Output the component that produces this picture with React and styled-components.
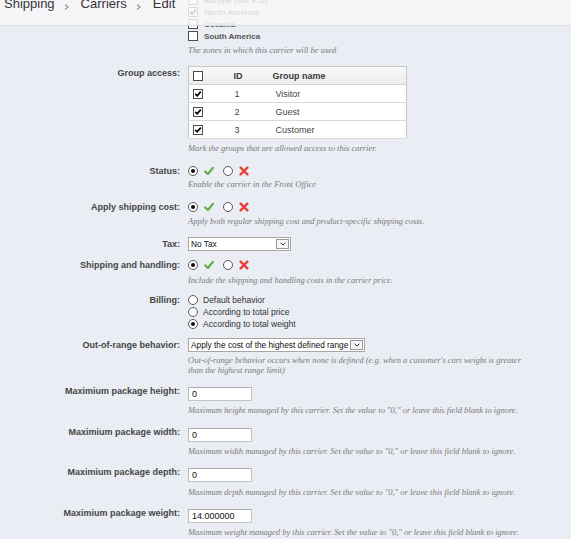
import React from 'react';
import styled, { createGlobalStyle } from 'styled-components';

const GlobalStyle = createGlobalStyle`
  html, body { margin: 0; padding: 0; }
  body {
    background: #eaedf4;
    font-family: "Liberation Sans", Arial, sans-serif;
    overflow: hidden;
  }
`;

const Page = styled.div`
  position: relative;
  width: 571px;
  height: 539px;
  overflow: hidden;
  background: #eaedf4;
`;

const TopBar = styled.header`
  position: absolute;
  top: 0;
  left: 0;
  right: 0;
  height: 25px;
  background: rgba(248, 248, 249, 0.84);
  border-bottom: 1px solid #dcdde1;
  z-index: 2;
`;

const Breadcrumb = styled.nav`
  display: flex;
  align-items: flex-start;
  margin-top: -3.5px;
  padding-left: 4px;
  font-size: 13px;
  line-height: 13px;
  color: #333;
`;

const Crumb = styled.span`
  white-space: nowrap;
`;

const Sep = styled.svg`
  width: 5px;
  height: 6px;
  margin: 7.5px 12px 0 9px;
  flex: none;
`;

const Content = styled.main`
  display: flex;
  flex-direction: column;
  margin-top: -6px;
`;

const FormRow = styled.div`
  display: grid;
  grid-template-columns: 180px 1fr;
  column-gap: 8px;
  margin-top: ${p => p.$gap || 0}px;
`;

const Label = styled.div`
  text-align: right;
  font-weight: bold;
  font-size: 9px;
  line-height: ${p => p.$lh || 12}px;
  color: #464646;
  margin-top: ${p => p.$shift || 0}px;
  white-space: nowrap;
`;

const Field = styled.div`
  display: flex;
  flex-direction: column;
  align-items: flex-start;
  min-width: 0;
`;

const Help = styled.p`
  margin: ${p => (p.$mt === undefined ? 3 : p.$mt)}px 0 0;
  font-family: "Liberation Serif", "Times New Roman", serif;
  font-style: italic;
  font-size: 8.5px;
  line-height: 10px;
  color: #7a7a7a;
  white-space: nowrap;
`;

const ZoneItem = styled.div`
  display: flex;
  align-items: center;
  height: 12px;
  gap: 6px;
`;

const ZoneName = styled.span`
  font-weight: bold;
  font-size: 8px;
  color: #555;
  white-space: nowrap;
`;

const Box = styled.span`
  width: 10px;
  height: 10px;
  box-sizing: border-box;
  border: 1px solid #4c4c4c;
  background: #fff;
  display: inline-flex;
  align-items: center;
  justify-content: center;
  flex: none;
`;

const Check = ({ checked }) => (
  <Box>
    {checked && (
      <svg width="8" height="8" viewBox="0 0 8 8">
        <path d="M1.3 3.8 L3.2 5.8 L6.8 1.6" fill="none" stroke="#000" strokeWidth="1.7" />
      </svg>
    )}
  </Box>
);

const GroupTable = styled.table`
  width: 219px;
  border-collapse: collapse;
  border: 1px solid #c6c6c6;
  background: #fff;
  font-size: 9px;
  color: #444;
  table-layout: fixed;
`;

const HeadRow = styled.tr`
  height: 18px;
  background: linear-gradient(#f9f9f9, #ececec);
`;

const BodyRow = styled.tr`
  height: 18px;
  background: #fff;
`;

const Th = styled.th`
  padding: 0 0 0 ${p => p.$pl || 0}px;
  text-align: left;
  font-weight: bold;
  color: #3a3a3a;
  border-bottom: 1px solid #d2d2d2;
  vertical-align: middle;
`;

const Td = styled.td`
  padding: 0 0 0 ${p => p.$pl || 0}px;
  border-bottom: 1px solid #d9d9d9;
  vertical-align: middle;
`;

const CellBox = styled.div`
  display: flex;
  align-items: center;
`;

const Choice = styled.div`
  display: flex;
  align-items: center;
  height: 12px;
  font-size: 8.5px;
  color: #333;
  white-space: nowrap;
`;

const Radio = styled.span`
  width: 10px;
  height: 10px;
  box-sizing: border-box;
  border-radius: 50%;
  border: 1px solid #5a5a5a;
  background: #fff;
  display: inline-flex;
  align-items: center;
  justify-content: center;
  flex: none;
  margin-right: ${p => p.$mr || 0}px;
  &::after {
    content: '';
    width: 4px;
    height: 4px;
    border-radius: 50%;
    background: #111;
    display: ${p => (p.$checked ? 'block' : 'none')};
  }
`;

const Icon = styled.svg`
  width: 10px;
  height: 10px;
  flex: none;
  margin-right: ${p => p.$mr || 0}px;
`;

const YesIcon = (props) => (
  <Icon viewBox="0 0 10 10" {...props}>
    <path d="M1.2 5.4 L3.9 8 L8.9 1.8" fill="none" stroke="#5fae3e" strokeWidth="2.1" strokeLinecap="round" strokeLinejoin="round" />
  </Icon>
);

const NoIcon = (props) => (
  <Icon viewBox="0 0 10 10" {...props}>
    <path d="M1.6 1.6 L8.4 8.4 M8.4 1.6 L1.6 8.4" fill="none" stroke="#e5443c" strokeWidth="2.4" strokeLinecap="round" />
  </Icon>
);

const Toggle = ({ on }) => (
  <Choice>
    <Radio $checked={on} $mr={6} />
    <YesIcon $mr={9} />
    <Radio $checked={!on} $mr={6} />
    <NoIcon />
  </Choice>
);

const Select = styled.div`
  display: flex;
  align-items: stretch;
  box-sizing: border-box;
  width: ${p => p.$w}px;
  height: 14px;
  border: 1px solid #a6a6a6;
  background: #fff;
  font-size: 8.3px;
  line-height: 12px;
  color: #111;
`;

const SelectValue = styled.span`
  flex: 1;
  padding-left: 2px;
  white-space: nowrap;
  overflow: hidden;
`;

const SelectArrow = styled.span`
  width: 13px;
  box-sizing: border-box;
  margin: 1px;
  border: 1px solid #979797;
  background: #f7f7f7;
  display: flex;
  align-items: center;
  justify-content: center;
  flex: none;
`;

const Caret = () => (
  <svg width="6" height="4" viewBox="0 0 6 4">
    <path d="M0.6 0.7 L3 3 L5.4 0.7" fill="none" stroke="#333" strokeWidth="1" />
  </svg>
);

const TextInput = styled.input`
  width: 64px;
  height: 14px;
  box-sizing: border-box;
  margin: 0;
  padding: 0 3px;
  border: 1px solid #c4c4c4;
  border-top-color: #ababab;
  border-left-color: #b5b5b5;
  background: #fff;
  font-family: "Liberation Sans", Arial, sans-serif;
  font-size: 9px;
  color: #111;
  outline: none;
`;

const zones = [
  { name: 'Europe (out E.U)', checked: false },
  { name: 'North America', checked: true },
  { name: 'Oceania', checked: false },
  { name: 'South America', checked: false },
];

const groups = [
  { id: 1, name: 'Visitor' },
  { id: 2, name: 'Guest' },
  { id: 3, name: 'Customer' },
];

const billing = [
  { text: 'Default behavior', checked: false },
  { text: 'According to total price', checked: false },
  { text: 'According to total weight', checked: true },
];

const limits = [
  { label: 'Maximium package height:', value: '0', help: 'Maximum height managed by this carrier. Set the value to "0," or leave this field blank to ignore.', gap: 12.5, mt: 4 },
  { label: 'Maximium package width:', value: '0', help: 'Maximum width managed by this carrier. Set the value to "0," or leave this field blank to ignore.', gap: 13, mt: 4 },
  { label: 'Maximium package depth:', value: '0', help: 'Maximum depth managed by this carrier. Set the value to "0," or leave this field blank to ignore.', gap: 12, mt: 5 },
  { label: 'Maximium package weight:', value: '14.000000', help: 'Maximum weight managed by this carrier. Set the value to "0," or leave this field blank to ignore.', gap: 12, mt: 4 },
];

const Chevron = () => (
  <Sep viewBox="0 0 5 6">
    <path d="M1 0.5 L4 3 L1 5.5" fill="none" stroke="#9a9a9a" strokeWidth="1.3" />
  </Sep>
);

export default function App() {
  return (
    <Page>
      <GlobalStyle />
      <TopBar>
        <Breadcrumb>
          <Crumb>Shipping</Crumb>
          <Chevron />
          <Crumb>Carriers</Crumb>
          <Chevron />
          <Crumb>Edit</Crumb>
        </Breadcrumb>
      </TopBar>

      <Content>
        <FormRow>
          <Label />
          <Field>
            {zones.map(z => (
              <ZoneItem key={z.name}>
                <Check checked={z.checked} />
                <ZoneName>{z.name}</ZoneName>
              </ZoneItem>
            ))}
            <Help $mt={3}>The zones in which this carrier will be used</Help>
          </Field>
        </FormRow>

        <FormRow $gap={11}>
          <Label $shift={1}>Group access:</Label>
          <Field>
            <GroupTable>
              <colgroup>
                <col style={{ width: 45 }} />
                <col style={{ width: 39 }} />
                <col />
              </colgroup>
              <thead>
                <HeadRow>
                  <Th $pl={4}><CellBox><Check /></CellBox></Th>
                  <Th>ID</Th>
                  <Th>Group name</Th>
                </HeadRow>
              </thead>
              <tbody>
                {groups.map(g => (
                  <BodyRow key={g.id}>
                    <Td $pl={4}><CellBox><Check checked /></CellBox></Td>
                    <Td $pl={1}>{g.id}</Td>
                    <Td $pl={3}>{g.name}</Td>
                  </BodyRow>
                ))}
              </tbody>
            </GroupTable>
            <Help $mt={4}>Mark the groups that are allowed access to this carrier.</Help>
          </Field>
        </FormRow>

        <FormRow $gap={12}>
          <Label>Status:</Label>
          <Field>
            <Toggle on />
            <Help $mt={2}>Enable the carrier in the Front Office</Help>
          </Field>
        </FormRow>

        <FormRow $gap={12}>
          <Label>Apply shipping cost:</Label>
          <Field>
            <Toggle on />
            <Help $mt={3}>Apply both regular shipping cost and product-specific shipping costs.</Help>
          </Field>
        </FormRow>

        <FormRow $gap={11}>
          <Label $lh={14}>Tax:</Label>
          <Field>
            <Select $w={103}>
              <SelectValue>No Tax</SelectValue>
              <SelectArrow><Caret /></SelectArrow>
            </Select>
          </Field>
        </FormRow>

        <FormRow $gap={8}>
          <Label>Shipping and handling:</Label>
          <Field>
            <Toggle on />
            <Help $mt={4}>Include the shipping and handling costs in the carrier price.</Help>
          </Field>
        </FormRow>

        <FormRow $gap={8.5}>
          <Label>Billing:</Label>
          <Field>
            {billing.map(b => (
              <Choice key={b.text}>
                <Radio $checked={b.checked} $mr={5} />
                {b.text}
              </Choice>
            ))}
          </Field>
        </FormRow>

        <FormRow $gap={8}>
          <Label $lh={14}>Out-of-range behavior:</Label>
          <Field>
            <Select $w={177}>
              <SelectValue>Apply the cost of the highest defined range</SelectValue>
              <SelectArrow><Caret /></SelectArrow>
            </Select>
            <Help $mt={3}>
              Out-of-range behavior occurs when none is defined (e.g. when a customer's cart weight is greater
              <br />
              than the highest range limit)
            </Help>
          </Field>
        </FormRow>

        {limits.map(l => (
          <FormRow key={l.label} $gap={l.gap}>
            <Label $lh={14} $shift={-3.5}>{l.label}</Label>
            <Field>
              <TextInput readOnly value={l.value} />
              <Help $mt={l.mt}>{l.help}</Help>
            </Field>
          </FormRow>
        ))}
      </Content>
    </Page>
  );
}
